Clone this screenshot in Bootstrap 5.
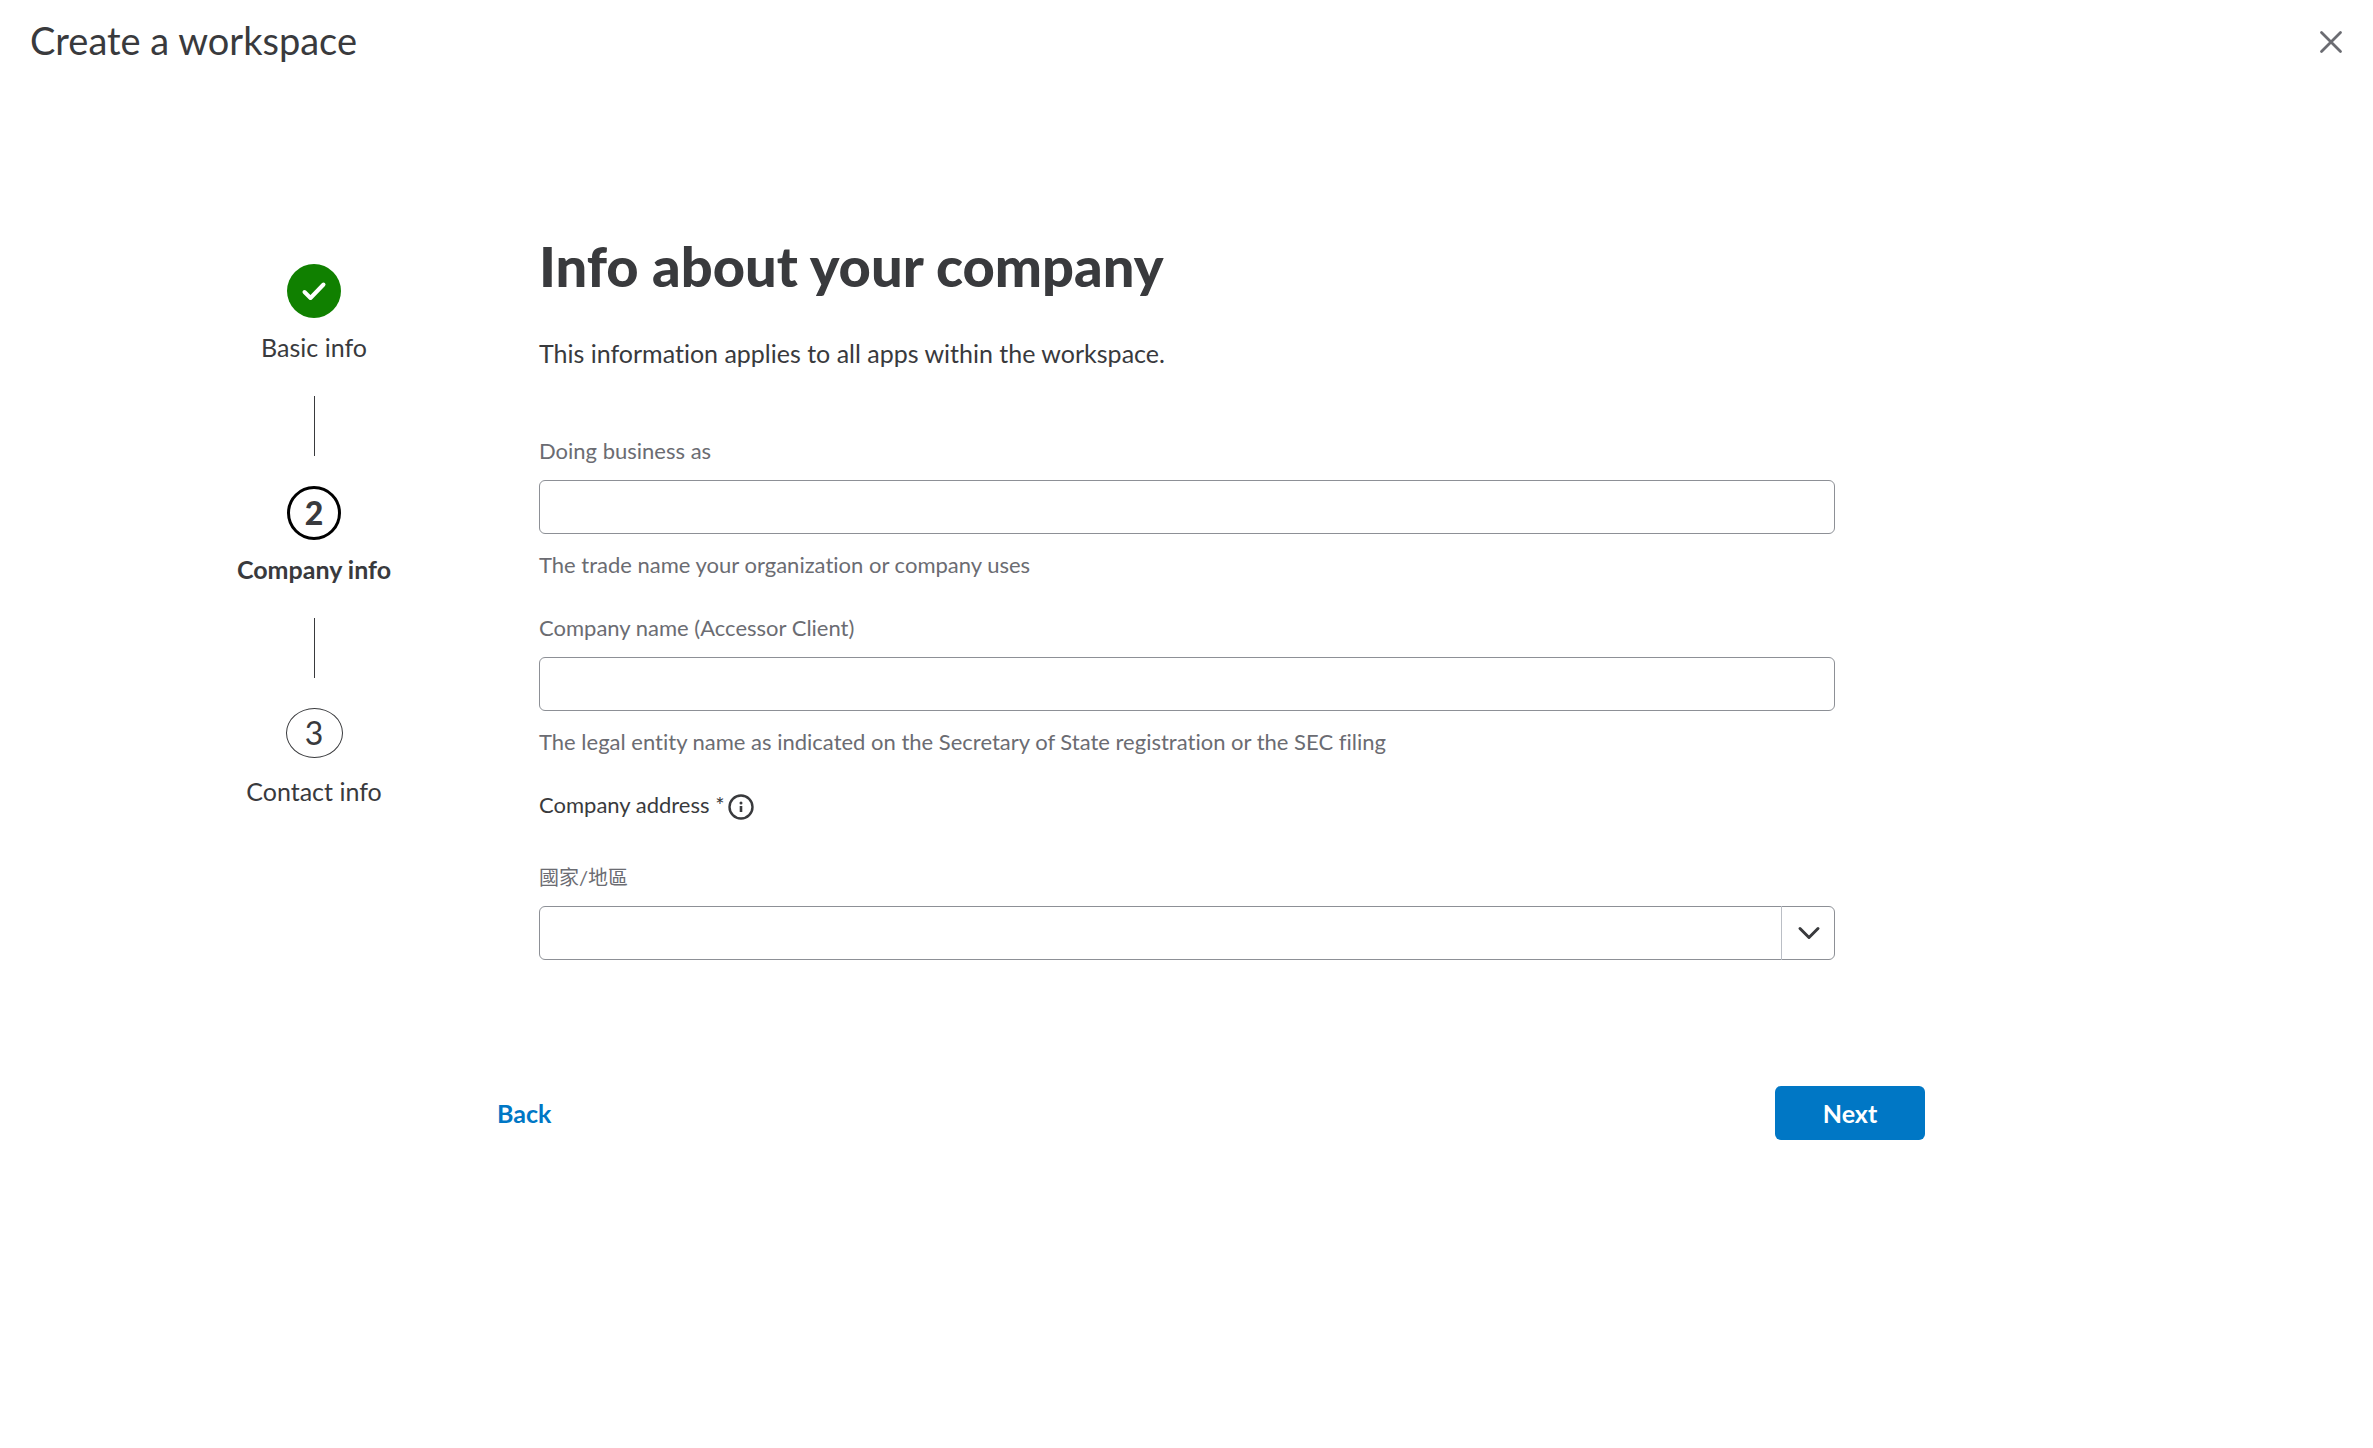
<!DOCTYPE html>
<html lang="en">
<head>
<meta charset="utf-8">
<meta name="viewport" content="width=device-width, initial-scale=1">
<title>Create a workspace</title>
<link href="https://cdn.jsdelivr.net/npm/bootstrap@5.3.0/dist/css/bootstrap.min.css" rel="stylesheet">
<style>
  body { font-family: Lato, "Noto Sans CJK TC", sans-serif; font-size: 25px; line-height: 36px; color: #393a3d; background: #fff; font-variant-ligatures: none; }
  .page-head { padding: 16px 30px 0; }
  .page-title { font-size: 38px; line-height: 48px; }
  .close-btn { width: 24px; height: 24px; margin-top: 4px; color: #6b6c72; }
  .wizard { padding: 172px 448px 0 224px; }
  .steps { width: 180px; padding-top: 28px; }
  .step-mark { height: 54px; margin-bottom: 11px; }
  .dot { width: 54px; height: 54px; }
  .dot-done { background: #108000; }
  .dot-now { border: 3px solid #000; font-size: 32px; font-weight: 900; }
  .dot-next { width: 57px; height: 50px; border: 1px solid #393a3d; font-size: 32px; }
  .step-line { width: 1px; height: 60px; margin: 31px 0 30px; background: #393a3d; }
  .panel { margin-left: 93px; }
  .fields { padding: 0 90px 0 42px; }
  .panel-title { font-size: 56px; line-height: 60px; font-weight: 900; margin-bottom: 39px; }
  .intro { margin-bottom: 65px; }
  .field-text { font-size: 22px; line-height: 30px; }
  .muted { color: #6b6c72; }
  .field { margin-bottom: 33px; }
  .field-label { margin-bottom: 14px; }
  .field-help { margin-top: 16px; }
  .box { height: 54px; border: 1px solid #8d9096; border-radius: 6px; font-size: 22px; }
  .address { gap: 2px; margin-bottom: 42px; }
  .country-label { font-size: 20px; }
  .country { appearance: none; background: none; }
  .arrow { width: 54px; border-left: 1px solid #babec5; pointer-events: none; }
  .actions { margin-top: 126px; }
  .act { height: 54px; font-size: 25px; line-height: 36px; font-weight: 700; border-radius: 6px; }
  .act-back { color: #0077c5; }
  .act-next { width: 150px; background: #0077c5; color: #fff; }
</style>
</head>
<body>
<header class="page-head d-flex justify-content-between align-items-center">
  <h1 class="page-title fw-normal mb-0">Create a workspace</h1>
  <button type="button" class="close-btn btn p-0 border-0 d-flex" aria-label="Close">
    <svg width="24" height="24" viewBox="0 0 24 24" fill="none" stroke="currentColor" stroke-width="2.8" stroke-linecap="round"><path d="M2.500 2.500l19 19M21.500 2.500l-19 19"/></svg>
  </button>
</header>

<main class="wizard d-flex align-items-start">
  <nav class="steps d-flex flex-column align-items-center flex-shrink-0 text-nowrap" aria-label="Progress">
    <div class="step-mark"><span class="dot dot-done rounded-circle d-flex align-items-center justify-content-center">
      <svg width="26" height="20" viewBox="0 0 26 20" fill="none" stroke="#fff" stroke-width="4" stroke-linecap="round" stroke-linejoin="round"><path d="M3.500 11l6 6L22.500 3.500"/></svg>
    </span></div>
    <div>Basic info</div>
    <div class="step-line"></div>
    <div class="step-mark"><span class="dot dot-now rounded-circle d-flex align-items-center justify-content-center">2</span></div>
    <div class="fw-bold">Company info</div>
    <div class="step-line"></div>
    <div class="step-mark"><span class="dot dot-next rounded-circle d-flex align-items-center justify-content-center">3</span></div>
    <div>Contact info</div>
  </nav>

  <form class="panel flex-grow-1">
    <div class="fields">
      <h2 class="panel-title">Info about your company</h2>
      <p class="intro">This information applies to all apps within the workspace.</p>

      <div class="field">
        <label class="field-label field-text muted d-block" for="dba">Doing business as</label>
        <input class="form-control box" type="text" id="dba" aria-describedby="dba-help">
        <div class="field-help field-text muted" id="dba-help">The trade name your organization or company uses</div>
      </div>

      <div class="field">
        <label class="field-label field-text muted d-block" for="company">Company name (Accessor Client)</label>
        <input class="form-control box" type="text" id="company" aria-describedby="company-help">
        <div class="field-help field-text muted" id="company-help">The legal entity name as indicated on the Secretary of State registration or the SEC filing</div>
      </div>

      <div class="address field-text d-flex align-items-center">
        <span>Company address *</span>
        <button type="button" class="btn p-0 border-0 d-flex" aria-label="About the company address">
          <svg width="28" height="30" viewBox="0 0 28 30" fill="none" stroke="#393a3d"><circle cx="14" cy="17" r="11.500" stroke-width="2.400"/><path d="M14 16v6" stroke-width="2.600"/><circle cx="14" cy="13" r="1.500" fill="#393a3d" stroke="none"/></svg>
        </button>
      </div>

      <label class="field-label field-text country-label muted d-block" for="country" lang="zh-Hant">國家/地區</label>
      <div class="position-relative">
        <select class="form-select box country" id="country"><option></option></select>
        <span class="arrow position-absolute top-0 end-0 h-100 d-flex align-items-center justify-content-center">
          <svg width="24" height="16" viewBox="0 0 24 16" fill="none" stroke="#393a3d" stroke-width="3" stroke-linecap="round" stroke-linejoin="round"><path d="M3 3.500l9 9 9-9"/></svg>
        </span>
      </div>
    </div>

    <div class="actions d-flex justify-content-between">
      <button type="button" class="btn act act-back p-0 border-0">Back</button>
      <button type="submit" class="btn act act-next p-0 border-0">Next</button>
    </div>
  </form>
</main>
<script src="https://cdn.jsdelivr.net/npm/bootstrap@5.3.0/dist/js/bootstrap.bundle.min.js"></script>
</body>
</html>
